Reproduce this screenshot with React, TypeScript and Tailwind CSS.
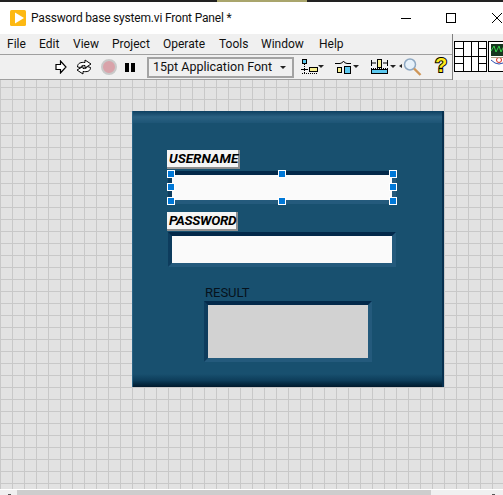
import React from 'react';

const uiFont = "font-['Roboto',sans-serif]";

function LogoIcon() {
  return (
    <svg width="16" height="16" viewBox="0 0 16 16" className="ml-[10px] mr-[5px] shrink-0">
      <rect width="16" height="16" rx="1.5" fill="#fdb913" />
      <path d="M5 2.5 L14 8 L5 13.5 Z" fill="#fff" />
    </svg>
  );
}

function RunIcon() {
  return (
    <svg width="12" height="14" viewBox="0 0 12 14" className="shrink-0">
      <path d="M1 4.5 H5.5 V1 L11 7 L5.5 13 V9.5 H1 Z" fill="#fff" stroke="#000" strokeWidth="1.2" />
    </svg>
  );
}

function RunContinuousIcon() {
  return (
    <svg width="16" height="16" viewBox="0 0 16 16" className="shrink-0">
      <path d="M1.5 8 C1.5 4 5 3 9 3.5 V1 L15 5 L9 9 V6.5 C6.5 6.3 5.5 6.5 4.5 8.5 Z" fill="#fff" stroke="#000" strokeWidth="1" />
      <path d="M14.5 8.5 C14.5 12.5 11 13 7 12.5 V15 L1 11 L7 7.5 V9.5 C9.5 9.7 10.5 9.5 11.5 7.5 Z" fill="#fff" stroke="#000" strokeWidth="1" />
    </svg>
  );
}

function AlignIcon() {
  return (
    <svg width="23" height="16" viewBox="0 0 23 16" className="shrink-0">
      <rect x="1.5" y="0.5" width="4" height="4" fill="#5cc8ee" stroke="#000" />
      <path d="M3.5 5 V14" stroke="#000" strokeDasharray="1 1" />
      <path d="M0 10.5 H7" stroke="#000" />
      <rect x="8.5" y="8.5" width="8" height="4" fill="#f7ef8f" stroke="#000" />
      <path d="M1 14.5 H17" stroke="#000" strokeDasharray="1 1" />
      <path d="M17 6 H23 L20 9 Z" fill="#222" />
    </svg>
  );
}

function DistributeIcon() {
  return (
    <svg width="25" height="16" viewBox="0 0 25 16" className="shrink-0">
      <path d="M0 4.5 H5 Q8 4 8.5 2 Q9 4 12 4.5 H16" fill="none" stroke="#000" />
      <rect x="2.5" y="8.5" width="4" height="5" fill="#f7ef8f" stroke="#000" />
      <rect x="9.5" y="7.5" width="6" height="7" fill="#5cc8ee" stroke="#000" />
      <path d="M18 6 H24 L21 9 Z" fill="#222" />
    </svg>
  );
}

function ResizeIcon() {
  return (
    <svg width="27" height="16" viewBox="0 0 27 16" className="shrink-0">
      <path d="M0.5 1 V7 M16.5 1 V7" stroke="#000" />
      <path d="M1 4 H5 M12 4 H16" stroke="#000" />
      <rect x="6.5" y="0.5" width="4" height="8" fill="#f7ef8f" stroke="#000" />
      <path d="M0 9.5 H17" stroke="#000" strokeDasharray="1 1" />
      <rect x="0.5" y="10.5" width="16" height="4" fill="#5cc8ee" stroke="#000" />
      <path d="M19 6 H25 L22 9 Z" fill="#222" />
    </svg>
  );
}

function ZoomIcon() {
  return (
    <svg width="23" height="18" viewBox="0 0 23 18" className="shrink-0">
      <path d="M0 8 L3 6 V10 Z" fill="#222" />
      <circle cx="11" cy="6.5" r="5.5" fill="#e6f1fa" stroke="#8ea8c2" strokeWidth="1.5" />
      <path d="M15 10.5 L21.5 17" stroke="#cf9658" strokeWidth="2.4" />
    </svg>
  );
}

function HelpIcon() {
  return (
    <span className="font-['Liberation_Sans',sans-serif] text-[20px] font-bold leading-none text-[#fbe91c] [-webkit-text-stroke:2px_#000] [paint-order:stroke_fill]">
      ?
    </span>
  );
}

function ConnectorPane() {
  return (
    <svg width="33" height="31" viewBox="0 0 33 31" className="shrink-0">
      <rect x="0.5" y="0.5" width="32" height="30" fill="#fff" stroke="#000" />
      <path d="M0 15.5 H33 M9.5 0 V31 M17.5 0 V31 M24.5 0 V31 M0 7.5 H9 M0 22.5 H9 M25 7.5 H33 M25 22.5 H33" stroke="#000" fill="none" />
    </svg>
  );
}

function ViIcon() {
  return (
    <svg width="16" height="31" viewBox="0 0 16 31" className="shrink-0">
      <rect x="0.5" y="0.5" width="20" height="30" fill="#fff" stroke="#000" />
      <rect x="3" y="3" width="18" height="12" fill="#16351f" />
      <path d="M3 10 L6 5 L8 11 L11 5 L13 11 L16 5" fill="none" stroke="#37d24a" />
      <path d="M3 19 Q11 27 19 19" fill="none" stroke="#2d4fb0" />
      <circle cx="11" cy="19" r="2.5" fill="none" stroke="#d8281e" />
      <path d="M3 16.5 H16" stroke="#a79a80" />
    </svg>
  );
}

function Caret() {
  return <span className="block h-0 w-0 border-x-[3px] border-t-[3px] border-x-transparent border-t-[#222]" />;
}

function Label({ text, className }: { text: string; className: string }) {
  return (
    <div className={`flex h-[19px] items-center whitespace-nowrap border-b-2 border-r-2 border-b-[#8f8f8f] border-r-[#8f8f8f] bg-[#f5f5f5] pl-[2px] pt-px text-[13.5px] font-bold italic leading-none text-black ${className}`}>
      {text}
    </div>
  );
}

function Handle({ className }: { className: string }) {
  return <span className={`absolute h-2 w-2 border border-white bg-[#0078d7] ${className}`} />;
}

const frame =
  'border-[4px] border-t-[#03294a] border-l-[#0d3c5d] border-r-[#245a7c] border-b-[#245a7c]';

export default function App() {
  return (
    <div className={`flex h-[495px] w-[503px] flex-col overflow-hidden bg-white text-black ${uiFont}`}>
      <div className="flex h-[2px] shrink-0 bg-[#222222]">
        <div className="ml-[217px] w-[90px] bg-[#a9a56c]" />
      </div>

      {/* title bar */}
      <div className="flex h-[32px] shrink-0 items-center">
        <LogoIcon />
        <span className="text-[12px] leading-none tracking-[-0.19px] text-[#111]">Password base system.vi Front Panel *</span>
        <div className="ml-auto flex items-center">
          <span className="mr-[35px] h-px w-[10px] bg-black" />
          <span className="mr-[36px] h-[10px] w-[10px] border border-black" />
          <svg width="11" height="10" viewBox="0 0 11 10" className="shrink-0">
            <path d="M0 0 L10 10 M10 0 L0 10" stroke="#000" fill="none" />
          </svg>
        </div>
      </div>

      {/* menu + toolbar + connector pane */}
      <div className="flex h-[46px] shrink-0 bg-[#f0f0f0]">
        <div className="flex w-[452px] shrink-0 flex-col">
          <div className="flex h-[20px] shrink-0 items-center pl-[7px] text-[12px] leading-none text-[#111]">
            <span className="w-[32px]">File</span>
            <span className="w-[34px]">Edit</span>
            <span className="w-[39px]">View</span>
            <span className="w-[51px]">Project</span>
            <span className="w-[56px]">Operate</span>
            <span className="w-[42px]">Tools</span>
            <span className="w-[58px]">Window</span>
            <span>Help</span>
          </div>
          <div className="flex h-[26px] items-center border-y border-y-[#a0a0a0] pl-[55px]">
            <RunIcon />
            <span className="ml-[9px]"><RunContinuousIcon /></span>
            <span className="ml-[9px] h-[16px] w-[16px] rounded-full border-2 border-[#c9c9c9] bg-[#d9a3aa]" />
            <span className="ml-[8px] flex gap-[2px]">
              <span className="h-[9px] w-[4px] bg-black" />
              <span className="h-[9px] w-[4px] bg-black" />
            </span>
            <div className="ml-[12px] flex h-[21px] w-[147px] items-center whitespace-nowrap border-2 border-[#a3a3a3] pl-[4px] pr-[6px] text-[12.5px] leading-none text-[#111]">
              <span>15pt Application Font</span>
              <span className="ml-auto"><Caret /></span>
            </div>
            <span className="ml-[7px]"><AlignIcon /></span>
            <span className="ml-[11px]"><DistributeIcon /></span>
            <span className="ml-[11px]"><ResizeIcon /></span>
            <span className="ml-[1px]"><ZoomIcon /></span>
            <span className="ml-[13px]"><HelpIcon /></span>
          </div>
        </div>
        <div className="flex flex-1 items-start gap-px border-l border-l-[#808080] pl-px pt-[7px]">
          <ConnectorPane />
          <ViIcon />
        </div>
      </div>

      {/* canvas with the panel grid */}
      <div className="flex-1 bg-[#e2e2e2] bg-[linear-gradient(to_right,#c8c8c8_1px,transparent_1px),linear-gradient(to_bottom,#c8c8c8_1px,transparent_1px)] bg-[size:12px_12px] bg-[position:0px_7px] pl-[132px] pt-[31px]">
        <div className="flex h-[276px] w-[312px] flex-col border-l border-r-2 border-l-[#2a6385] border-r-[#06304f] bg-[#18506f]">
          <div className="h-[12px] shrink-0 bg-gradient-to-b from-[#0c3f60] via-[#2a6182] to-[#1d5576]" />

          <div className="flex flex-1 flex-col pl-[34px] pt-[27px]">
            <Label text="USERNAME" className="w-[73px]" />
            <div className="relative ml-px mt-[2px] w-fit">
              <div className={`h-[33px] w-[228px] bg-[#fafafa] ${frame}`} />
              <Handle className="-left-[1px] -top-[1px]" />
              <Handle className="left-[110px] -top-[1px]" />
              <Handle className="left-[221px] -top-[1px]" />
              <Handle className="-left-[1px] top-[12px]" />
              <Handle className="left-[221px] top-[12px]" />
              <Handle className="-left-[1px] top-[26px]" />
              <Handle className="left-[110px] top-[26px]" />
              <Handle className="left-[221px] top-[26px]" />
            </div>
            <div className="mt-[8px]">
              <Label text="PASSWORD" className="w-[71px] tracking-[-0.3px]" />
            </div>
            <div className={`ml-px mt-px h-[35px] w-[228px] bg-[#fafafa] ${frame}`} />
            <div className="ml-[38px] mt-[18px] text-[13px] leading-[16px] text-[#06121c]">RESULT</div>
            <div className={`ml-[37px] mt-0 h-[61px] w-[168px] bg-[#d2d2d2] ${frame}`} />
          </div>

          <div className="h-[13px] shrink-0 bg-gradient-to-b from-[#18506f] via-[#0d3d5a] to-[#01192c]" />
        </div>
      </div>

      {/* scrollbar */}
      <div className="relative flex h-[6px] shrink-0 border-t border-t-white bg-[#f0f0f0] pl-[17px]">
        <div className="w-[414px] bg-[#cdcdcd]" />
        <span className="absolute bottom-0 left-[8px] h-[1px] w-[3px] bg-[#555]" />
        <span className="absolute bottom-0 left-[492px] h-[1px] w-[3px] bg-[#555]" />
      </div>
    </div>
  );
}
